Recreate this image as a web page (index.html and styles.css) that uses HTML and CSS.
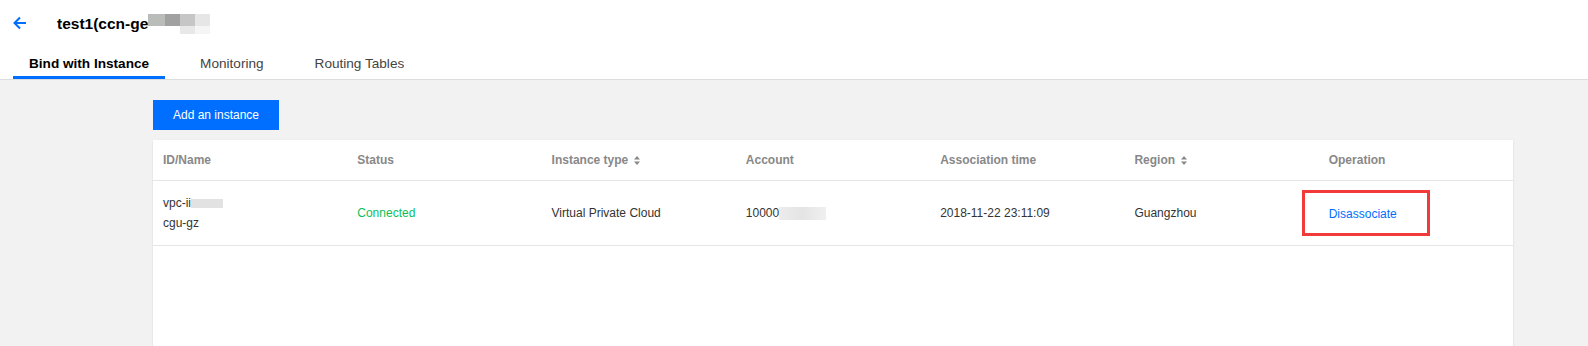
FILE: index.html
```html
<!DOCTYPE html>
<html>
<head>
<meta charset="utf-8">
<link rel="stylesheet" href="styles.css">
</head>
<body>
<header class="header">
  <div class="title-row">
    <svg class="back" width="14" height="14" viewBox="0 0 14 14"><path d="M13 7H2M7 1.5L1.5 7 7 12.5" fill="none" stroke="#006eff" stroke-width="2"/></svg>
    <h1 class="title">test1(ccn-ge</h1>
    <span class="mosaic"><i class="m1"></i><i class="m2"></i><i class="m3"></i><i class="m4"></i><i class="m5"></i><i class="m6"></i><i class="m7"></i><i class="m8"></i></span>
  </div>
  <nav class="tabs">
    <a class="tab active">Bind with Instance</a>
    <a class="tab">Monitoring</a>
    <a class="tab">Routing Tables</a>
  </nav>
</header>
<main class="content">
  <button class="btn-primary">Add an instance</button>
  <section class="card">
    <div class="row head">
      <div class="cell">ID/Name</div>
      <div class="cell">Status</div>
      <div class="cell">Instance type <svg class="sort" width="6" height="9" viewBox="0 0 6 9"><path d="M3 0L6 3.5H0Z M3 9L0 5.5H6Z" fill="#888"/></svg></div>
      <div class="cell">Account</div>
      <div class="cell">Association time</div>
      <div class="cell">Region <svg class="sort" width="6" height="9" viewBox="0 0 6 9"><path d="M3 0L6 3.5H0Z M3 9L0 5.5H6Z" fill="#888"/></svg></div>
      <div class="cell">Operation</div>
    </div>
    <div class="row body">
      <div class="cell stack"><span>vpc-ii<i class="blur-id"></i></span><span>cgu-gz</span></div>
      <div class="cell ok">Connected</div>
      <div class="cell">Virtual Private Cloud</div>
      <div class="cell">10000<i class="blur-acc"></i></div>
      <div class="cell">2018-11-22 23:11:09</div>
      <div class="cell">Guangzhou</div>
      <div class="cell op"><a class="link">Disassociate</a><span class="mark"></span></div>
    </div>
  </section>
</main>
</body>
</html>
```
FILE: styles.css
```css
html, body {
  margin: 0;
  padding: 0;
  background: #f2f2f2;
  font-family: "Liberation Sans", Arial, sans-serif;
  color: #333;
  height: 346px;
  overflow: hidden;
}
.header {
  background: #fff;
  border-bottom: 1px solid #dddddd;
}
.title-row {
  height: 46px;
  display: flex;
  align-items: center;
  padding-left: 13px;
}
.back {
  display: block;
  margin-right: 30px;
  margin-top: 0;
}
.title {
  margin: 0;
  font-size: 15.5px;
  font-weight: bold;
  color: #000;
  padding-top: 2px;
}
.mosaic {
  display: grid;
  grid-template-columns: 17px 15px 15px 15px;
  grid-template-rows: 12px 8px;
  margin-top: 2px;
}
.mosaic i { display: block; }
.m1 { background: #b9bcb9; }
.m2 { background: #a1a1a1; }
.m3 { background: #c6c6c6; }
.m4 { background: #e6e6e6; }
.m5 { background: #ffffff; }
.m6 { background: #ffffff; }
.m7 { background: #e8e8e8; }
.m8 { background: #f5f5f5; }
.tabs {
  display: flex;
  gap: 19px;
  padding-left: 13px;
  height: 33px;
}
.tab {
  padding: 8px 16px 2px;
  line-height: 20px;
  font-size: 13.6px;
  color: #444;
  border-bottom: 3px solid transparent;
}
.tab.active {
  font-weight: bold;
  color: #000;
  border-bottom-color: #006eff;
}
.content {
  padding: 20px 0 0 153px;
}
.btn-primary {
  display: block;
  width: 126px;
  height: 30px;
  border: 0;
  background: #006eff;
  color: #fff;
  font-family: inherit;
  font-size: 12px;
  padding: 0;
  margin-bottom: 10px;
}
.card {
  width: 1360px;
  height: 260px;
  background: #fff;
  box-shadow: 0 1px 2px rgba(0,0,0,0.12);
}
.row {
  display: grid;
  grid-template-columns: repeat(7, 1fr);
  border-bottom: 1px solid #e5e5e5;
  align-items: center;
}
.row.head {
  height: 40px;
  color: #888;
  font-weight: bold;
  font-size: 12px;
}
.row.body {
  height: 64px;
  font-size: 12px;
}
.cell {
  padding-left: 10px;
  display: flex;
  align-items: center;
}
.sort {
  margin-left: 6px;
}
.stack {
  flex-direction: column;
  align-items: flex-start;
  line-height: 20px;
}
.blur-id {
  display: inline-block;
  width: 32px;
  height: 9px;
  background: #e2e2e2;
  vertical-align: middle;
}
.blur-acc {
  display: inline-block;
  width: 47px;
  height: 13px;
  background: linear-gradient(90deg, #ececec, #e4e4e4 50%, #f0f0f0);
}
.ok {
  color: #0abf5b;
}
.op {
  position: relative;
  padding-top: 2px;
}
.link {
  color: #006eff;
}
.mark {
  position: absolute;
  left: -17px;
  top: -15px;
  width: 122px;
  height: 40px;
  border: 3px solid #f23a3a;
}
```
